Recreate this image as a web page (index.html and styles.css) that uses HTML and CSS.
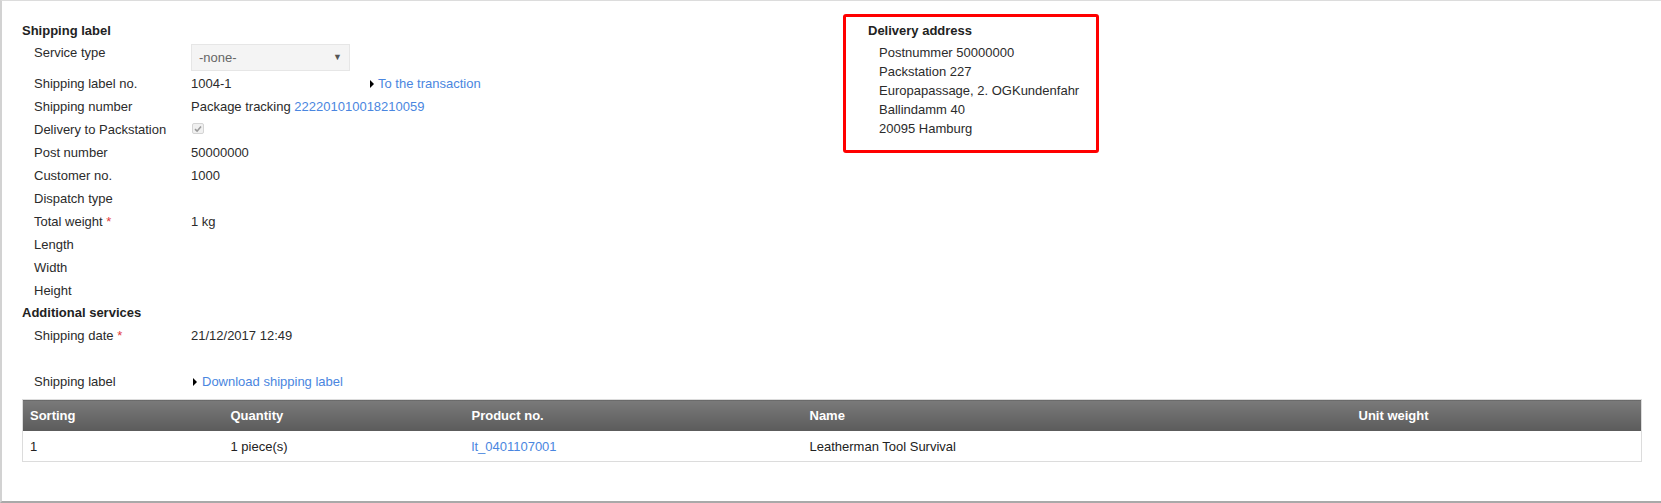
FILE: index.html
```html
<!DOCTYPE html>
<html lang="en">
<head>
<meta charset="utf-8">
<title>Shipping label</title>
<link rel="stylesheet" href="styles.css">
</head>
<body>
<div class="frame">
  <div class="top">
    <div class="form">
      <h2 class="section-title">Shipping label</h2>
      <div class="field field-select">
        <div class="label">Service type</div>
        <div class="value"><div class="select"><span>-none-</span><span class="caret">&#9660;</span></div></div>
      </div>
      <div class="field">
        <div class="label">Shipping label no.</div>
        <div class="value"><span class="value-fixed">1004-1</span><a class="arrow-link" href="#">To the transaction</a></div>
      </div>
      <div class="field">
        <div class="label">Shipping number</div>
        <div class="value">Package tracking <a class="link" href="#">222201010018210059</a></div>
      </div>
      <div class="field">
        <div class="label">Delivery to Packstation</div>
        <div class="value"><span class="checkbox"><svg width="8" height="8" viewBox="0 0 8 8"><path d="M1 4.2 L3.1 6.2 L7 1.6" fill="none" stroke="#9a9a9a" stroke-width="1.6"/></svg></span></div>
      </div>
      <div class="field">
        <div class="label">Post number</div>
        <div class="value">50000000</div>
      </div>
      <div class="field">
        <div class="label">Customer no.</div>
        <div class="value">1000</div>
      </div>
      <div class="field">
        <div class="label">Dispatch type</div>
        <div class="value"></div>
      </div>
      <div class="field">
        <div class="label">Total weight <span class="req">*</span></div>
        <div class="value">1 kg</div>
      </div>
      <div class="field">
        <div class="label">Length</div>
        <div class="value"></div>
      </div>
      <div class="field">
        <div class="label">Width</div>
        <div class="value"></div>
      </div>
      <div class="field">
        <div class="label">Height</div>
        <div class="value"></div>
      </div>
      <h2 class="section-title section-title-alt">Additional services</h2>
      <div class="field">
        <div class="label">Shipping date <span class="req">*</span></div>
        <div class="value">21/12/2017 12:49</div>
      </div>
      <div class="field field-empty"></div>
      <div class="field">
        <div class="label">Shipping label</div>
        <div class="value"><a class="arrow-link arrow-link-tight" href="#">Download shipping label</a></div>
      </div>
    </div>
    <div class="address">
      <h2 class="section-title">Delivery address</h2>
      <div class="address-lines">
        <div>Postnummer 50000000</div>
        <div>Packstation 227</div>
        <div>Europapassage, 2. OGKundenfahr</div>
        <div>Ballindamm 40</div>
        <div>20095 Hamburg</div>
      </div>
    </div>
  </div>
  <table class="items">
    <colgroup>
      <col class="c1"><col class="c2"><col class="c3"><col class="c4"><col class="c5">
    </colgroup>
    <thead>
      <tr><th>Sorting</th><th>Quantity</th><th>Product no.</th><th>Name</th><th>Unit weight</th></tr>
    </thead>
    <tbody>
      <tr><td>1</td><td>1 piece(s)</td><td><a class="link" href="#">lt_0401107001</a></td><td>Leatherman Tool Survival</td><td></td></tr>
    </tbody>
  </table>
</div>
</body>
</html>
```

FILE: styles.css
```css
html, body {
  margin: 0;
  padding: 0;
  background: #fff;
}

body {
  font-family: "Liberation Sans", Arial, sans-serif;
  font-size: 13px;
  color: #2b2b2b;
}

.frame {
  width: 1661px;
  height: 503px;
  box-sizing: border-box;
  border-left: 2px solid #d2d2d2;
  border-top: 1px solid #dcdcdc;
  border-bottom: 2px solid #a9a9a9;
  padding: 13px 20px 0 20px;
  overflow: hidden;
}

.top {
  display: flex;
  align-items: flex-start;
}

.form {
  width: 821px;
  flex: none;
  padding-top: 7px;
}

.section-title {
  margin: 0;
  font-size: 13px;
  font-weight: bold;
  line-height: 20px;
  color: #222;
}

.section-title-alt {
  line-height: 22px;
}

.field {
  display: grid;
  grid-template-columns: 157px 1fr;
  padding-left: 12px;
  line-height: 23px;
  min-height: 23px;
}

.field-empty {
  height: 23px;
}

.value {
  display: flex;
  align-items: center;
  white-space: pre;
}

.field-select .value {
  align-items: flex-start;
}

.select {
  margin: 3px 0 1px;
  width: 159px;
  height: 27px;
  box-sizing: border-box;
  background: #f4f4f4;
  border: 1px solid #e6e6e6;
  display: flex;
  align-items: center;
  justify-content: space-between;
  padding: 0 7px 0 7px;
  color: #666;
  line-height: 25px;
}

.caret {
  font-size: 9px;
  color: #555;
}

.value-fixed {
  width: 179px;
}

.link {
  color: #4a86e0;
  text-decoration: none;
}

.arrow-link {
  color: #4a86e0;
  text-decoration: none;
  display: inline-flex;
  align-items: center;
}

.arrow-link::before {
  content: "";
  width: 0;
  height: 0;
  border-left: 4px solid #000;
  border-top: 4px solid transparent;
  border-bottom: 4px solid transparent;
  margin-right: 4px;
}

.arrow-link-tight::before {
  margin-left: 2px;
  margin-right: 5px;
}

.req {
  color: #e23a3a;
}

.checkbox {
  width: 12px;
  height: 11px;
  box-sizing: border-box;
  border: 1px solid #d4d4d4;
  border-radius: 2px;
  background: #f0f0f0;
  display: inline-flex;
  align-items: center;
  justify-content: center;
  margin-left: 1px;
  margin-top: -2px;
}

.address {
  width: 256px;
  box-sizing: border-box;
  border: 3px solid #ff0000;
  border-radius: 3px;
  padding: 4px 10px 12px 22px;
}

.address-lines {
  margin-top: 2px;
  padding-left: 11px;
  line-height: 19px;
}

.items {
  margin-top: 6px;
  width: 100%;
  table-layout: fixed;
  border-collapse: collapse;
  border: 1px solid #dcdcdc;
}

.c1 { width: 201px; }
.c2 { width: 241px; }
.c3 { width: 338px; }
.c4 { width: 549px; }
.c5 { width: 290px; }

.items th {
  height: 31px;
  padding: 0 7px;
  text-align: left;
  font-weight: bold;
  color: #fff;
  background: linear-gradient(#7a7a7a, #5b5b5b);
}

.items td {
  height: 30px;
  padding: 0 7px;
  border-bottom: 1px solid #dcdcdc;
  color: #222;
}
```
